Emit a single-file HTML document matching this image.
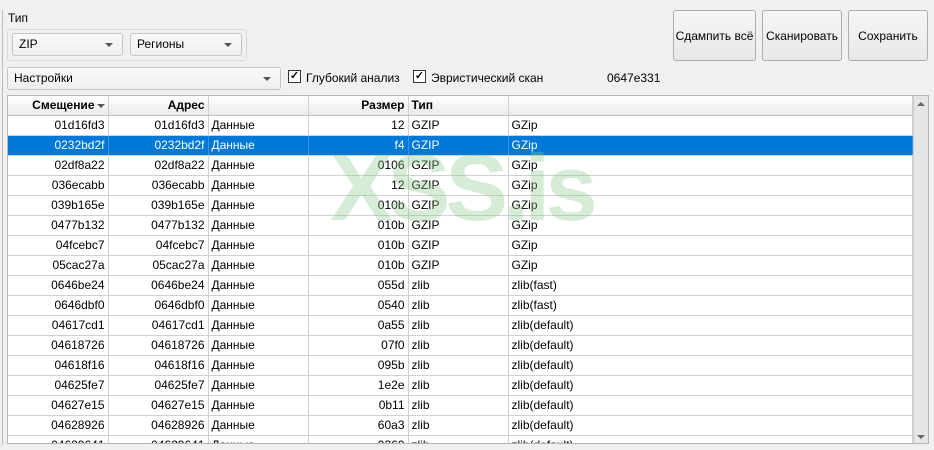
<!DOCTYPE html>
<html><head><meta charset="utf-8"><style>
*{box-sizing:border-box;margin:0;padding:0}
body{width:934px;height:450px;background:#f0f0f0;font-family:"Liberation Sans",sans-serif;font-size:12px;color:#000;position:relative;overflow:hidden}
.a{position:absolute}
.btn{position:absolute;top:10px;height:51px;border:1px solid #adadad;border-radius:3px;background:linear-gradient(#f6f6f6,#e8e8e8);display:flex;align-items:center;justify-content:center;font-size:12px}
.cb{position:absolute;height:23px;border:1px solid #c5c5c5;border-radius:3px;background:linear-gradient(#fafafa,#efefef);padding-left:6px;line-height:21px}
.cb:after{content:"";position:absolute;right:9px;top:9px;border-left:4px solid transparent;border-right:4px solid transparent;border-top:4px solid #555}
.chk{position:absolute;top:70px;width:13px;height:13px;border:1px solid #333;background:#fff;font-size:11px;line-height:11px;text-align:center;font-weight:bold}
table{border-collapse:collapse;table-layout:fixed;position:absolute;left:8px;top:96px;width:904px}
td,th{height:20px;border-right:1px solid #d0d0d0;border-bottom:1px solid #d0d0d0;padding:0 3px;white-space:nowrap;overflow:hidden;font-weight:normal}
th{height:19px;background:linear-gradient(#fff,#eaeaea);font-weight:bold;border-bottom:1px solid #c0c0c0}
.r{text-align:right}.l{text-align:left}
tr.s td{background:#0078d7;color:#fff;border-right-color:#3d94dd}
.tri{display:inline-block;vertical-align:middle;margin-left:2px;border-left:4px solid transparent;border-right:4px solid transparent;border-top:4px solid #555}
</style></head><body>
<div class="a" style="left:2px;top:10px;width:1px;height:435px;background:#bbb"></div>
<div class="a" style="left:8px;top:11px">Тип</div>
<div class="a" style="left:7px;top:29px;width:240px;height:32px;border:1px solid #d8d8d8;border-radius:3px"></div>
<div class="cb" style="left:12px;top:33px;width:111px">ZIP</div>
<div class="cb" style="left:130px;top:33px;width:112px">Регионы</div>
<div class="cb" style="left:7px;top:67px;width:274px">Настройки</div>
<div class="chk" style="left:288px">✓</div>
<div class="a" style="left:306px;top:71px">Глубокий анализ</div>
<div class="chk" style="left:413px">✓</div>
<div class="a" style="left:431px;top:71px">Эвристический скан</div>
<div class="a" style="left:607px;top:71px">0647e331</div>
<div class="btn" style="left:673px;width:83px">Сдампить всё</div>
<div class="btn" style="left:762px;width:80px">Сканировать</div>
<div class="btn" style="left:848px;width:80px">Сохранить</div>
<div class="a" style="left:7px;top:95px;width:922px;height:349px;border:1px solid #b5b5b5;background:#fff;overflow:hidden">
<table style="left:0;top:0">
<colgroup><col style="width:100px"><col style="width:100px"><col style="width:100px"><col style="width:100px"><col style="width:100px"><col style="width:404px"></colgroup>
<tr><th class="r">Смещение<span class="tri"></span></th><th class="r">Адрес</th><th></th><th class="r">Размер</th><th class="l">Тип</th><th></th></tr>
<tr><td class="r">01d16fd3</td><td class="r">01d16fd3</td><td>Данные</td><td class="r">12</td><td>GZIP</td><td>GZip</td></tr>
<tr class="s"><td class="r">0232bd2f</td><td class="r">0232bd2f</td><td>Данные</td><td class="r">f4</td><td>GZIP</td><td>GZip</td></tr>
<tr><td class="r">02df8a22</td><td class="r">02df8a22</td><td>Данные</td><td class="r">0106</td><td>GZIP</td><td>GZip</td></tr>
<tr><td class="r">036ecabb</td><td class="r">036ecabb</td><td>Данные</td><td class="r">12</td><td>GZIP</td><td>GZip</td></tr>
<tr><td class="r">039b165e</td><td class="r">039b165e</td><td>Данные</td><td class="r">010b</td><td>GZIP</td><td>GZip</td></tr>
<tr><td class="r">0477b132</td><td class="r">0477b132</td><td>Данные</td><td class="r">010b</td><td>GZIP</td><td>GZip</td></tr>
<tr><td class="r">04fcebc7</td><td class="r">04fcebc7</td><td>Данные</td><td class="r">010b</td><td>GZIP</td><td>GZip</td></tr>
<tr><td class="r">05cac27a</td><td class="r">05cac27a</td><td>Данные</td><td class="r">010b</td><td>GZIP</td><td>GZip</td></tr>
<tr><td class="r">0646be24</td><td class="r">0646be24</td><td>Данные</td><td class="r">055d</td><td>zlib</td><td>zlib(fast)</td></tr>
<tr><td class="r">0646dbf0</td><td class="r">0646dbf0</td><td>Данные</td><td class="r">0540</td><td>zlib</td><td>zlib(fast)</td></tr>
<tr><td class="r">04617cd1</td><td class="r">04617cd1</td><td>Данные</td><td class="r">0a55</td><td>zlib</td><td>zlib(default)</td></tr>
<tr><td class="r">04618726</td><td class="r">04618726</td><td>Данные</td><td class="r">07f0</td><td>zlib</td><td>zlib(default)</td></tr>
<tr><td class="r">04618f16</td><td class="r">04618f16</td><td>Данные</td><td class="r">095b</td><td>zlib</td><td>zlib(default)</td></tr>
<tr><td class="r">04625fe7</td><td class="r">04625fe7</td><td>Данные</td><td class="r">1e2e</td><td>zlib</td><td>zlib(default)</td></tr>
<tr><td class="r">04627e15</td><td class="r">04627e15</td><td>Данные</td><td class="r">0b11</td><td>zlib</td><td>zlib(default)</td></tr>
<tr><td class="r">04628926</td><td class="r">04628926</td><td>Данные</td><td class="r">60a3</td><td>zlib</td><td>zlib(default)</td></tr>
<tr><td class="r">04629641</td><td class="r">04629641</td><td>Данные</td><td class="r">0360</td><td>zlib</td><td>zlib(default)</td></tr>
</table>
<div class="a" style="left:905px;top:0;width:16px;height:347px;background:#e6e6e6;border-left:1px solid #ccc"></div>
<div class="a" style="left:909px;top:6px;border-left:4px solid transparent;border-right:4px solid transparent;border-bottom:4px solid #666"></div>
<div class="a" style="left:909px;top:339px;border-left:4px solid transparent;border-right:4px solid transparent;border-top:4px solid #666"></div>
</div>
<div class="a" style="left:330px;top:138px;font-size:94px;font-weight:bold;color:rgba(140,200,140,0.35);letter-spacing:-5px;line-height:100px">XSS.is</div>
</body></html>
